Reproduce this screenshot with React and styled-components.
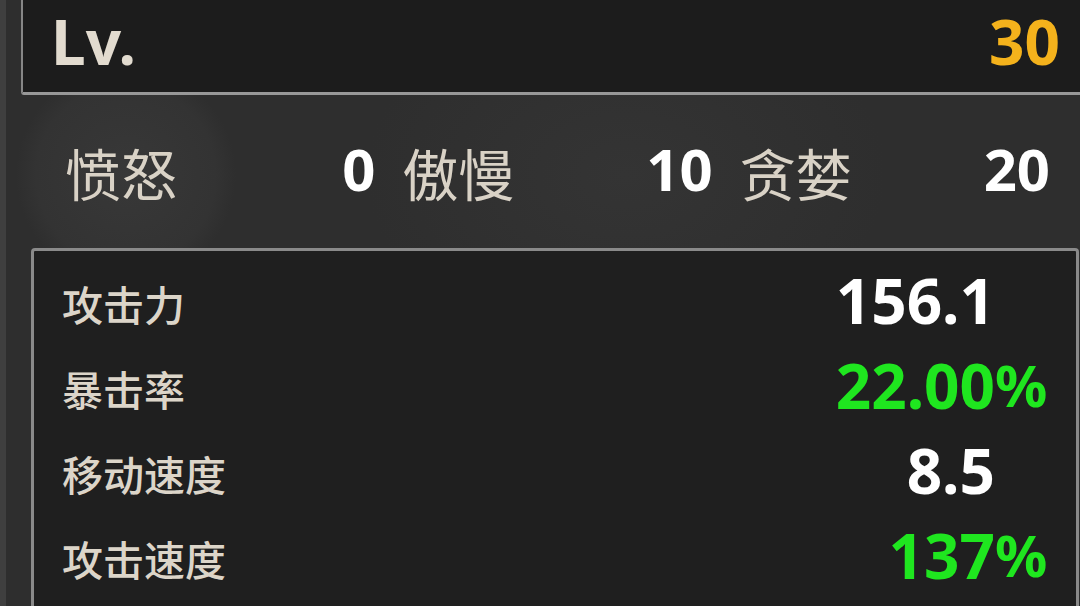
import React from "react";
import styled, { createGlobalStyle } from "styled-components";

const sins = [
  { label: "愤怒", value: 0 },
  { label: "傲慢", value: 10 },
  { label: "贪婪", value: 20 },
];

const stats = [
  { label: "攻击力", value: "156.1", suffix: "", tone: "plain" },
  { label: "暴击率", value: "22.00", suffix: "%", tone: "buff" },
  { label: "移动速度", value: "8.5", suffix: "", tone: "plain" },
  { label: "攻击速度", value: "137", suffix: "%", tone: "buff" },
];

function App() {
  return (
    <>
      <GlobalStyle />
      <Panel>
        <LevelBar>
          <LevelLabel>Lv.</LevelLabel>
          <LevelValue>30</LevelValue>
        </LevelBar>
        <SinRow>
          {sins.map((sin) => (
            <SinItem key={sin.label}>
              <SinLabel>{sin.label}</SinLabel>
              <SinValue>{sin.value}</SinValue>
            </SinItem>
          ))}
        </SinRow>
        <StatBox>
          {stats.map((stat) => (
            <StatRow key={stat.label}>
              <StatLabel>{stat.label}</StatLabel>
              <StatValue tone={stat.tone}>{stat.value}</StatValue>
              <StatSuffix tone={stat.tone}>{stat.suffix}</StatSuffix>
            </StatRow>
          ))}
        </StatBox>
      </Panel>
    </>
  );
}

const GlobalStyle = createGlobalStyle`
  html, body {
    margin: 0;
    background: #2e2e2e;
    overflow: hidden;
  }
`;

const Panel = styled.div`
  width: 1080px;
  height: 606px;
  box-sizing: border-box;
  border-left: 6px solid #3f3f3f;
  background:
    radial-gradient(circle at 120px 175px, #383838 0, #333333 90px, rgba(46, 46, 46, 0) 110px),
    radial-gradient(ellipse at 620px 175px, #343434 0, rgba(46, 46, 46, 0) 260px),
    #2e2e2e;
  display: flex;
  flex-direction: column;
  overflow: hidden;
  font-family: "Noto Sans", "Noto Sans CJK SC", sans-serif;
`;

const LevelBar = styled.div`
  height: 95px;
  margin-left: 15px;
  margin-right: -10px;
  padding: 0 30px 10px 28px;
  box-sizing: border-box;
  display: flex;
  align-items: center;
  justify-content: space-between;
  background: #1c1c1c;
  border-left: 2px solid #868686;
  border-bottom: 3px solid #989898;
  border-bottom-left-radius: 3px;
`;

const LevelLabel = styled.span`
  font-size: 62px;
  font-weight: 700;
  color: #e2dbcf;
  line-height: 1;
`;

const LevelValue = styled.span`
  font-size: 62px;
  font-weight: 700;
  color: #f4b21c;
  line-height: 1;
`;

const SinRow = styled.div`
  height: 153px;
  padding: 0 30px 6px 59px;
  box-sizing: border-box;
  display: grid;
  grid-template-columns: repeat(3, 1fr);
  column-gap: 27px;
  align-items: center;
`;

const SinItem = styled.div`
  display: flex;
  align-items: center;
  justify-content: space-between;
`;

const SinLabel = styled.span`
  font-family: "Noto Sans CJK SC", sans-serif;
  font-size: 56px;
  color: #d9d2c6;
  line-height: 1;
  margin-top: 6px;
`;

const SinValue = styled.span`
  font-size: 58px;
  font-weight: 700;
  color: #ffffff;
  line-height: 1;
`;

const StatBox = styled.div`
  flex: 1;
  margin-left: 25px;
  margin-right: 1px;
  margin-bottom: -10px;
  padding: 6px 28px 0 28px;
  background: #1f1f1f;
  border: 3px solid #8a8a8a;
  border-top-left-radius: 4px;
  border-top-right-radius: 4px;
`;

const StatRow = styled.div`
  height: 85px;
  display: grid;
  grid-template-columns: 1fr auto 53px;
  align-items: center;
`;

const StatLabel = styled.span`
  font-family: "Noto Sans CJK SC", sans-serif;
  font-size: 41px;
  font-weight: 500;
  color: #dcd5c9;
  line-height: 1;
  margin-top: 8px;
`;

const StatValue = styled.span`
  font-size: 62px;
  font-weight: 700;
  line-height: 1;
  text-align: right;
  color: ${(p) => (p.tone === "buff" ? "#1fe61f" : "#ffffff")};
`;

const StatSuffix = styled.span`
  font-size: 58px;
  font-weight: 700;
  line-height: 1;
  color: ${(p) => (p.tone === "buff" ? "#1fe61f" : "#ffffff")};
`;

export default App;
